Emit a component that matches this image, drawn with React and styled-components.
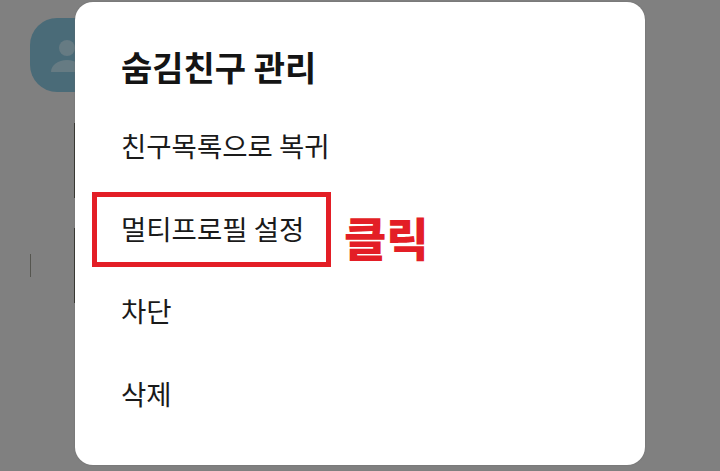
import React from 'react';
import styled, { createGlobalStyle } from 'styled-components';

const GlobalStyle = createGlobalStyle`
  html, body {
    margin: 0;
    padding: 0;
    background: #808080;
  }
  body {
    font-family: "Noto Sans CJK KR", "Liberation Sans", sans-serif;
  }
`;

const Page = styled.div`
  position: relative;
  width: 720px;
  height: 471px;
  overflow: hidden;
  background: #808080;
`;

const FriendList = styled.div`
  display: flex;
  flex-direction: column;
  padding: 18px 0 0 30px;
`;

const Avatar = styled.div`
  display: flex;
  align-items: center;
  justify-content: center;
  width: 74px;
  height: 74px;
  border-radius: 27px;
  background: #4a6b78;
`;

const FriendRow = styled.div`
  display: flex;
  align-items: center;
  gap: 43px;
  margin-top: ${({ $top }) => $top}px;
`;

const RowMark = styled.div`
  width: 1px;
  height: 23px;
  background: #55554f;
`;

const ThumbEdge = styled.div`
  width: 1px;
  height: 75px;
  margin-left: ${({ $indent }) => $indent}px;
  background: #2e2e28;
`;

const Modal = styled.div`
  position: absolute;
  top: 2px;
  left: 75px;
  width: 570px;
  height: 463px;
  box-sizing: border-box;
  padding: 37px 0 0 46px;
  background: #fff;
  border-radius: 18px;
  box-shadow: 0 0 1.5px #666;
`;

const Title = styled.h2`
  margin: 0 0 9px;
  font-size: 34px;
  line-height: 56px;
  font-weight: 700;
  color: #141414;
`;

const Menu = styled.div`
  position: relative;
  display: flex;
  flex-direction: column;
`;

const MenuItem = styled.div`
  height: 82.5px;
  display: flex;
  align-items: center;
  font-size: 27.5px;
  font-weight: 400;
  color: #1a1a1a;
`;

const Highlight = styled.div`
  position: absolute;
  top: 88px;
  left: -29px;
  width: 239px;
  height: 75px;
  box-sizing: border-box;
  border: 5px solid #e31e26;
`;

const ClickLabel = styled.span`
  position: absolute;
  top: 105px;
  left: 223px;
  font-size: 46px;
  line-height: 54px;
  font-weight: 900;
  color: #e31e26;
`;

const items = ['친구목록으로 복귀', '멀티프로필 설정', '차단', '삭제'];

const App = () => (
  <Page>
    <GlobalStyle />
    <FriendList>
      <Avatar>
        <svg width="38" height="38" viewBox="0 0 38 38" fill="#667b83">
          <circle cx="19" cy="12" r="8" />
          <path d="M3 36c0-7 7-12 16-12s16 5 16 12z" />
        </svg>
      </Avatar>
      <FriendRow $top={31}>
        <ThumbEdge $indent={44} />
      </FriendRow>
      <FriendRow $top={30}>
        <RowMark />
        <ThumbEdge />
      </FriendRow>
    </FriendList>
    <Modal>
      <Title>숨김친구 관리</Title>
      <Menu>
        {items.map((item) => (
          <MenuItem key={item}>{item}</MenuItem>
        ))}
        <Highlight />
        <ClickLabel>클릭</ClickLabel>
      </Menu>
    </Modal>
  </Page>
);

export default App;
